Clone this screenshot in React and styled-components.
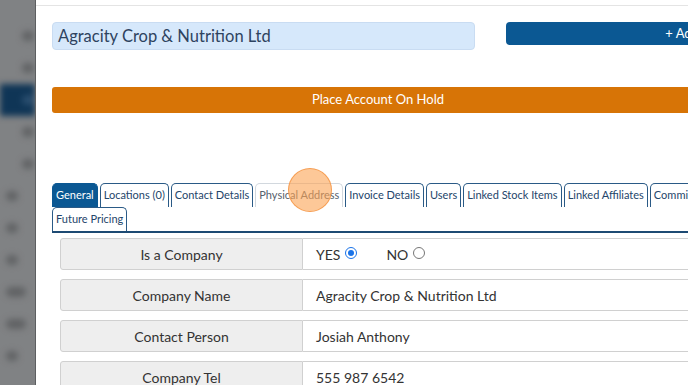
import React from "react";
import styled, { createGlobalStyle } from "styled-components";

const Global = createGlobalStyle`
  html, body { margin: 0; padding: 0; background: #fff; overflow: hidden; }
  body { font-family: Lato, "Open Sans", sans-serif; }
  * { box-sizing: border-box; }
`;

const Screen = styled.div`
  width: 688px;
  height: 385px;
  display: flex;
  overflow: hidden;
  position: relative;
`;

const SideStrip = styled.div`
  width: 36px;
  flex: none;
  background: #808284;
  border-right: 1px solid #5d5f61;
  overflow: hidden;
  position: relative;
`;

const SideBlur = styled.div`
  filter: blur(3px);
  display: flex;
  flex-direction: column;
  padding-top: 20px;
`;

const SideItem = styled.div`
  height: 32px;
  display: flex;
  align-items: center;
  padding-left: ${(p) => p.$indent}px;
  background: ${(p) => (p.$active ? "#0f3556" : "transparent")};
`;

const SideDot = styled.div`
  width: ${(p) => p.$w || 12}px;
  height: 10px;
  border-radius: 5px;
  background: ${(p) => (p.$active ? "#2b4f70" : "#606264")};
`;

const Panel = styled.div`
  flex: 1;
  background: #fff;
  overflow: hidden;
  position: relative;
`;

const HeaderLine = styled.div`
  height: 6px;
  border-bottom: 1px solid #e4e4e4;
`;

const Body = styled.div`
  width: 900px;
  padding: 16px 0 0 16px;
`;

const TopRow = styled.div`
  display: grid;
  grid-template-columns: 423px 432px;
  column-gap: 31px;
  align-items: start;
`;

const NameField = styled.div`
  height: 28px;
  background: #d6e8fb;
  border: 1px solid #c9dcf2;
  border-radius: 4px;
  color: #2e4360;
  font-size: 16.5px;
  line-height: 26px;
  padding-left: 5px;
`;

const AddButton = styled.div`
  height: 23px;
  background: #0b5893;
  border-radius: 4px;
  color: #fff;
  font-size: 13px;
  line-height: 23px;
  text-align: center;
`;

const HoldBar = styled.div`
  margin-top: 37px;
  width: 652px;
  height: 26px;
  background: #d77406;
  border-radius: 3px 0 0 3px;
  color: #fff;
  font-size: 13px;
  line-height: 25px;
  text-align: center;
`;

const TabStrip = styled.div`
  margin-top: 70px;
  display: flex;
  flex-wrap: wrap;
  column-gap: 2px;
  border-bottom: 2px solid #1d4a73;
  width: 877px;
`;

const TabBreak = styled.div`
  flex-basis: 100%;
  height: 0;
`;

const Tab = styled.div`
  height: 24px;
  padding: 0 3px;
  font-size: 11px;
  line-height: 22px;
  border: 1px solid ${(p) => (p.$active ? "#0b5893" : p.$muted ? "#d2d8de" : "#2a5a86")};
  border-bottom: none;
  border-radius: 5px 5px 0 0;
  background: ${(p) => (p.$active ? "#0b5893" : "#fff")};
  color: ${(p) => (p.$active ? "#fff" : p.$muted ? "#56616d" : "#24456a")};
  white-space: nowrap;
`;

const Rows = styled.div`
  padding: 5px 0 0 8px;
  display: flex;
  flex-direction: column;
  gap: 9px;
`;

const Row = styled.div`
  display: grid;
  grid-template-columns: 243px 1fr;
  height: 32px;
`;

const Label = styled.div`
  background: #eeeeee;
  border: 1px solid #d0d0d0;
  border-radius: 3px 0 0 3px;
  color: #333;
  font-size: 14px;
  display: flex;
  align-items: center;
  justify-content: center;
`;

const Value = styled.div`
  background: #fff;
  border: 1px solid #d0d0d0;
  border-left: none;
  color: #333;
  font-size: 14px;
  display: flex;
  align-items: center;
  padding-left: 13px;
`;

const RadioLabel = styled.span`
  display: inline-flex;
  align-items: center;
  gap: 5px;
  margin-right: 29px;
`;

const Radio = styled.span`
  width: 12px;
  height: 12px;
  border-radius: 50%;
  border: 1px solid ${(p) => (p.$on ? "#1a73e8" : "#767676")};
  background: #fff;
  display: inline-flex;
  align-items: center;
  justify-content: center;
  margin-top: -3px;
  &::after {
    content: "";
    width: 6px;
    height: 6px;
    border-radius: 50%;
    background: ${(p) => (p.$on ? "#1a73e8" : "transparent")};
  }
`;

const Cursor = styled.div`
  position: absolute;
  left: 252px;
  top: 168px;
  width: 44px;
  height: 44px;
  border-radius: 50%;
  background: rgba(252, 163, 84, 0.6);
  border: 1px solid rgba(244, 150, 70, 0.85);
  pointer-events: none;
`;

const sideItems = [
  { indent: 22 }, { indent: 22 }, { indent: 22, active: true }, { indent: 22 }, { indent: 22 },
  { indent: 6 }, { indent: 6 }, { indent: 6 }, { indent: 6, w: 20 }, { indent: 6, w: 20 }, { indent: 6 },
];

const tabs = [
  "Locations (0)", "Contact Details", "Physical Address", "Invoice Details", "Users",
  "Linked Stock Items", "Linked Affiliates", "Commissions",
];

export default function App() {
  return (
    <>
      <Global />
      <Screen>
        <SideStrip>
          <SideBlur>
            {sideItems.map((s, i) => (
              <SideItem key={i} $indent={s.indent} $active={s.active}>
                <SideDot $w={s.w} $active={s.active} />
              </SideItem>
            ))}
          </SideBlur>
        </SideStrip>
        <Panel>
          <HeaderLine />
          <Body>
            <TopRow>
              <NameField>Agracity Crop &amp; Nutrition Ltd</NameField>
              <AddButton>+ Add New Account</AddButton>
            </TopRow>
            <HoldBar>Place Account On Hold</HoldBar>
            <TabStrip>
              <Tab $active>General</Tab>
              {tabs.map((t) => (
                <Tab key={t} $muted={t === "Physical Address"}>{t}</Tab>
              ))}
              <TabBreak />
              <Tab>Future Pricing</Tab>
            </TabStrip>
            <Rows>
              <Row>
                <Label>Is a Company</Label>
                <Value>
                  <RadioLabel>YES <Radio $on /></RadioLabel>
                  <RadioLabel>NO <Radio /></RadioLabel>
                </Value>
              </Row>
              <Row>
                <Label>Company Name</Label>
                <Value>Agracity Crop &amp; Nutrition Ltd</Value>
              </Row>
              <Row>
                <Label>Contact Person</Label>
                <Value>Josiah Anthony</Value>
              </Row>
              <Row>
                <Label>Company Tel</Label>
                <Value>555 987 6542</Value>
              </Row>
            </Rows>
          </Body>
          <Cursor />
        </Panel>
      </Screen>
    </>
  );
}
